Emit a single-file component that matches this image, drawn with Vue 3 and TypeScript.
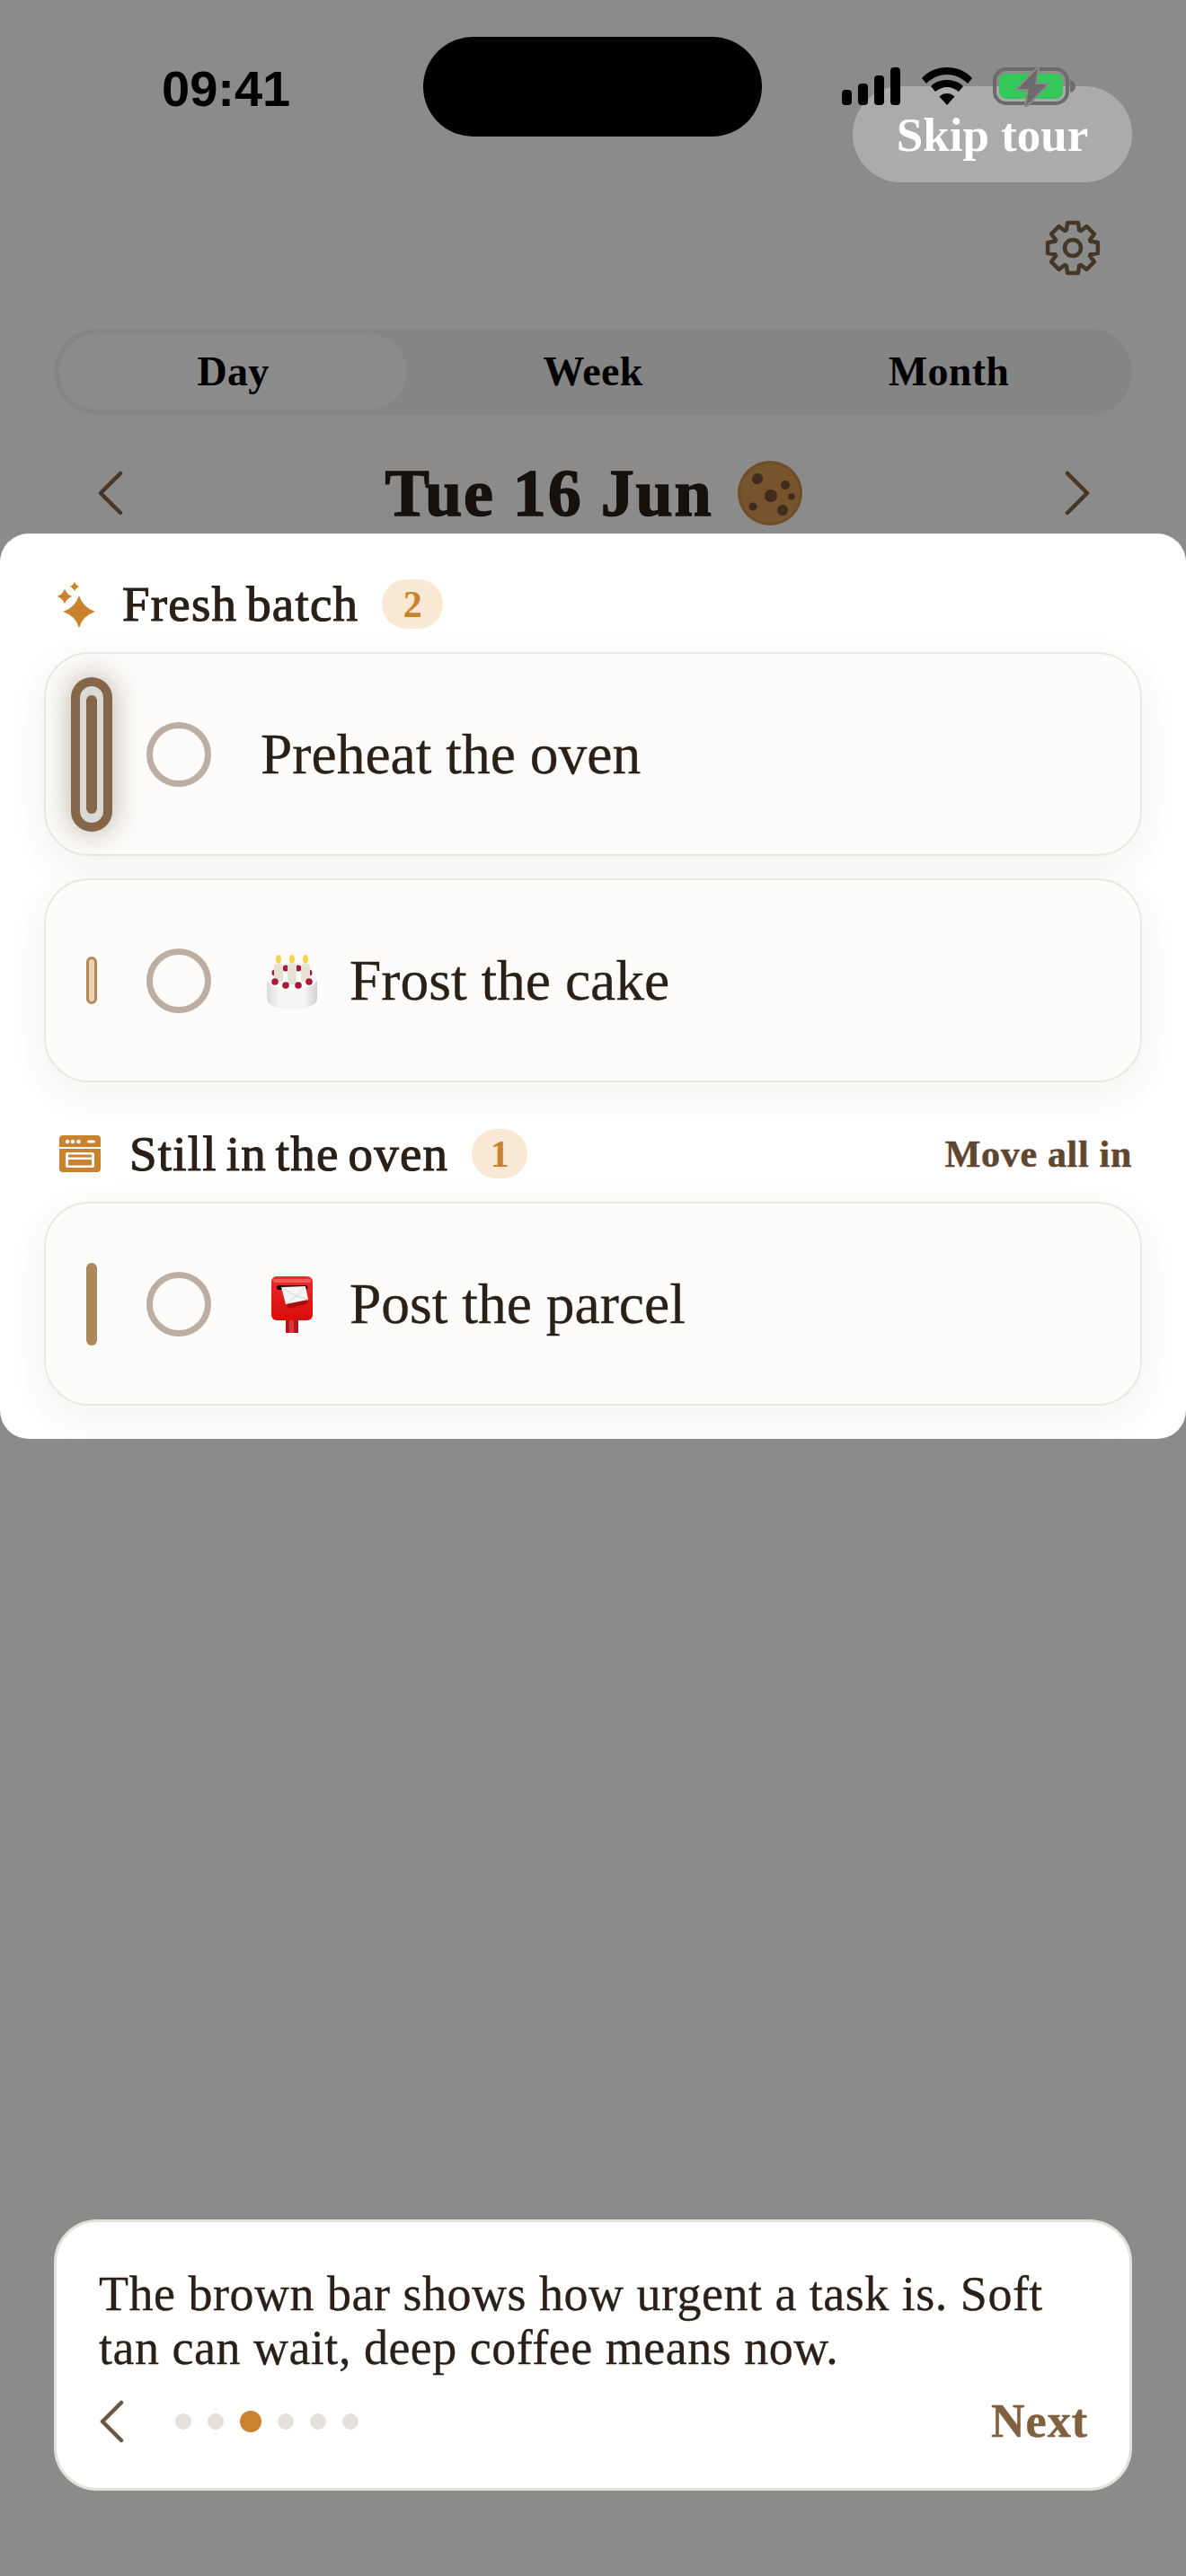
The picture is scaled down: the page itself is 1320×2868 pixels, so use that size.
<script setup lang="ts">
interface Task {
  title: string
  bar: 'active' | 'soft' | 'mid'
  emoji?: 'cake' | 'mailbox'
}

const tabs = ['Day', 'Week', 'Month']
const fresh: Task[] = [
  { title: 'Preheat the oven', bar: 'active' },
  { title: 'Frost the cake', bar: 'soft', emoji: 'cake' },
]
const oven: Task[] = [{ title: 'Post the parcel', bar: 'mid', emoji: 'mailbox' }]
const dots = [0, 1, 2, 3, 4, 5]
const activeDot = 2

function polar(r: number, deg: number) {
  const a = ((deg - 90) * Math.PI) / 180
  return `${(r * Math.cos(a)).toFixed(2)} ${(r * Math.sin(a)).toFixed(2)}`
}

// 8 blunt teeth, valleys sit halfway between them
const gearPath = (() => {
  let d = ''
  for (let k = 0; k < 8; k++) {
    const a = k * 45
    d += `${k ? 'L' : 'M'}${polar(21, a - 20)} L${polar(28.5, a - 12)} L${polar(28.5, a + 12)} L${polar(21, a + 20)} `
  }
  return d + 'Z'
})()

function star(cx: number, cy: number, r: number) {
  const c = r * 0.24
  return `M${cx} ${cy - r}Q${cx + c} ${cy - c} ${cx + r} ${cy}Q${cx + c} ${cy + c} ${cx} ${cy + r}Q${cx - c} ${cy + c} ${cx - r} ${cy}Q${cx - c} ${cy - c} ${cx} ${cy - r}Z`
}
</script>

<template>
  <div class="page">
    <header class="status">
      <span class="time">09:41</span>
      <div class="island"></div>
      <div class="status-icons">
        <svg width="66" height="42" viewBox="0 0 66 42" fill="#000">
          <rect x="0" y="25" width="11" height="17" rx="4" />
          <rect x="18" y="18" width="11" height="24" rx="4" />
          <rect x="36" y="9" width="11" height="33" rx="4" />
          <rect x="54" y="0" width="11" height="42" rx="4" />
        </svg>
        <svg width="58" height="42" viewBox="0 0 58 42" fill="#000">
          <path d="M29 0C18 0 8 4 1 12l5 6c6-6 14-10 23-10s17 4 23 10l5-6C50 4 40 0 29 0z" />
          <path d="M29 14c-7 0-13 2-18 7l5 6c4-3 8-5 13-5s9 2 13 5l5-6c-5-5-11-7-18-7z" />
          <path d="M29 29c-3 0-6 1-8.500 3.500L29 42l8.500-9.500C35 30 32 29 29 29z" />
        </svg>
        <svg width="93" height="44" viewBox="0 0 93 44">
          <rect x="2" y="2" width="81" height="38" rx="13" fill="none" stroke="#6b6b6b" stroke-width="4" />
          <rect x="7" y="7" width="71" height="28" rx="8" fill="#34c759" />
          <path d="M86 14c4 1 6 4 6 7s-2 6-6 7z" fill="#6b6b6b" />
          <path d="M50 1 L28 24 H40 L37 43 L60 19 H47 Z" fill="#6b6b6b" stroke="#8b8b8b" stroke-width="4" stroke-linejoin="round" paint-order="stroke" />
        </svg>
      </div>
    </header>

    <button class="skip">Skip tour</button>

    <div class="toolbar">
      <svg width="62" height="62" viewBox="-31 -31 62 62" fill="none" stroke="#453628" stroke-width="4.500" stroke-linejoin="round">
        <path :d="gearPath" />
        <circle r="9" />
      </svg>
    </div>

    <div class="tabs">
      <div v-for="(tab, i) in tabs" :key="tab" class="tab" :class="{ 'tab--on': i === 0 }">{{ tab }}</div>
    </div>

    <div class="date-row">
      <svg width="30" height="50" viewBox="0 0 30 50" fill="none" stroke="#453628" stroke-width="4.500" stroke-linecap="round" stroke-linejoin="round"><path d="M26 3 L4 25 L26 47" /></svg>
      <div class="date">
        <span>Tue 16 Jun</span>
        <svg width="72" height="72" viewBox="0 0 72 72">
          <circle cx="36" cy="36" r="36" fill="#6f4d26" />
          <circle cx="36" cy="36" r="33" fill="#75542e" />
          <circle cx="22" cy="20" r="6" fill="#402c1d" />
          <circle cx="53" cy="27" r="5" fill="#402c1d" />
          <circle cx="37" cy="39" r="7" fill="#402c1d" />
          <circle cx="60" cy="40" r="3.800" fill="#402c1d" />
          <circle cx="17" cy="51" r="4.600" fill="#402c1d" />
          <circle cx="50" cy="55" r="6" fill="#402c1d" />
        </svg>
      </div>
      <svg width="30" height="50" viewBox="0 0 30 50" fill="none" stroke="#453628" stroke-width="4.500" stroke-linecap="round" stroke-linejoin="round"><path d="M4 3 L26 25 L4 47" /></svg>
    </div>

    <main class="panel">
      <div class="sec-head">
        <svg class="sec-icon" width="44" height="52" viewBox="0 0 44 52" fill="#c9822e">
          <path :d="star(24, 34, 18)" />
          <path :d="star(8, 17, 8.5)" />
          <path :d="star(19, 6, 5.5)" />
        </svg>
        <span class="sec-title">Fresh batch</span>
        <span class="badge">2</span>
      </div>
      <div class="cards">
        <div v-for="t in fresh" :key="t.title" class="card">
          <span class="bar" :class="`bar--${t.bar}`"></span>
          <span class="radio"></span>
          <svg v-if="t.emoji === 'cake'" class="emoji emoji--cake" width="62" height="66" viewBox="0 0 62 66">
            <defs>
              <linearGradient id="cakeBody" x1="0" y1="0" x2="1" y2="0">
                <stop offset="0" stop-color="#dcdcdc" />
                <stop offset="0.25" stop-color="#f6f6f6" />
                <stop offset="0.75" stop-color="#f4f4f4" />
                <stop offset="1" stop-color="#d2d2d2" />
              </linearGradient>
            </defs>
            <path d="M3 29v22c0 7 12 12 28 12s28-5 28-12V29z" fill="url(#cakeBody)" />
            <ellipse cx="31" cy="29" rx="28" ry="12" fill="#fbfbfb" />
            <g fill="#a8183a">
              <circle cx="12" cy="22" r="3.500" /><circle cx="24" cy="17" r="3.500" /><circle cx="38" cy="17" r="3.500" /><circle cx="50" cy="22" r="3.500" />
            </g>
            <g fill="#e6e2d4">
              <rect x="11" y="12" width="10" height="20" rx="2" /><rect x="26" y="12" width="10" height="23" rx="2" /><rect x="41" y="12" width="10" height="20" rx="2" />
            </g>
            <g fill="#f8d24a">
              <ellipse cx="16" cy="7" rx="3" ry="5" /><ellipse cx="31" cy="7" rx="3" ry="5" /><ellipse cx="46" cy="7" rx="3" ry="5" />
            </g>
            <g fill="#a8183a">
              <circle cx="12" cy="32" r="3.800" /><circle cx="24" cy="36" r="3.800" /><circle cx="38" cy="36" r="3.800" /><circle cx="50" cy="32" r="3.800" />
            </g>
          </svg>
          <span class="task" :class="{ 'task--plain': !t.emoji }">{{ t.title }}</span>
        </div>
      </div>

      <div class="sec-head sec-head--second">
        <svg class="sec-icon" width="46" height="42" viewBox="0 0 46 42">
          <rect width="46" height="41" rx="4" fill="#c9822e" />
          <rect y="13" width="46" height="2" fill="#fff" />
          <circle cx="9" cy="7" r="2.300" fill="#fff" /><circle cx="15" cy="7" r="2.300" fill="#fff" /><circle cx="21.500" cy="7" r="2.300" fill="#fff" />
          <rect x="31" y="5.500" width="9" height="3" rx="1.500" fill="#fff" />
          <rect x="7" y="19" width="32" height="17" rx="2" fill="#fff" />
          <rect x="10" y="21.500" width="26" height="3" fill="#c9822e" />
          <rect x="10" y="27" width="26" height="6.500" fill="#c9822e" />
        </svg>
        <span class="sec-title">Still in the oven</span>
        <span class="badge">1</span>
        <span class="move">Move all in</span>
      </div>
      <div class="cards">
        <div v-for="t in oven" :key="t.title" class="card">
          <span class="bar" :class="`bar--${t.bar}`"></span>
          <span class="radio"></span>
          <svg class="emoji" width="62" height="66" viewBox="0 0 62 66">
            <defs>
              <linearGradient id="boxBody" x1="0" y1="0" x2="0" y2="1">
                <stop offset="0" stop-color="#ec2b2b" />
                <stop offset="1" stop-color="#d90b0b" />
              </linearGradient>
            </defs>
            <rect x="24" y="50" width="14" height="15" fill="#b5161c" />
            <rect x="28" y="50" width="5" height="15" fill="#d43a3e" />
            <rect x="8" y="2" width="46" height="49" rx="6" fill="url(#boxBody)" />
            <rect x="10" y="5" width="42" height="4" rx="2" fill="#f35a55" />
            <rect x="14" y="12" width="34" height="5" rx="2.500" fill="#120404" />
            <path d="M22 20 L46 18 L49 32 L27 38 Z" fill="#a90c0c" />
            <path d="M19 14 L46 13 L49 28 L24 33 Z" fill="#f5f5f5" />
            <path d="M19 14 L36 24 L46 13 M24 33 L36 24 L49 28" fill="none" stroke="#cfcfcf" stroke-width="0.800" />
          </svg>
          <span class="task">{{ t.title }}</span>
        </div>
      </div>
    </main>

    <aside class="coach">
      <p class="coach-text">The brown bar shows how urgent a task is. Soft tan can wait, deep coffee means now.</p>
      <div class="coach-foot">
        <svg width="28" height="48" viewBox="0 0 28 48" fill="none" stroke="#6a5443" stroke-width="4.500" stroke-linecap="round" stroke-linejoin="round"><path d="M25 3 L4 24 L25 45" /></svg>
        <div class="dots">
          <span v-for="d in dots" :key="d" class="dot" :class="{ 'dot--on': d === activeDot }"></span>
        </div>
        <span class="next">Next</span>
      </div>
    </aside>
  </div>
</template>

<style>
html,
body {
  margin: 0;
  background: #8b8b8b;
}
</style>

<style scoped>
.page {
  position: relative;
  width: 1320px;
  height: 2868px;
  overflow: hidden;
  background: #8b8b8b;
  font-family: 'Liberation Serif', serif;
}

.status {
  position: relative;
  z-index: 2;
  height: 152px;
  padding-top: 41px;
  box-sizing: border-box;
  display: flex;
  align-items: flex-start;
}
.time {
  width: 471px;
  padding: 28px 0 0 180px;
  box-sizing: border-box;
  font: 700 56px/60px 'Liberation Sans', sans-serif;
  color: #000;
}
.island {
  width: 377px;
  height: 111px;
  border-radius: 56px;
  background: #000;
}
.status-icons {
  display: flex;
  align-items: flex-start;
  gap: 22px;
  margin: 34px 0 0 89px;
}

.skip {
  position: absolute;
  left: 949px;
  top: 96px;
  width: 311px;
  height: 107px;
  border: 0;
  border-radius: 54px;
  background: rgba(255, 255, 255, 0.28);
  color: #fff;
  font: 700 53px 'Liberation Serif', serif;
}

.toolbar {
  display: flex;
  justify-content: flex-end;
  padding: 93px 95px 0 0;
}

.tabs {
  margin: 59px 60px 0;
  height: 96px;
  padding: 6px;
  box-sizing: border-box;
  border-radius: 48px;
  background: #858585;
  display: grid;
  grid-template-columns: repeat(3, 1fr);
}
.tab {
  border-radius: 42px;
  padding-bottom: 2px;
  display: flex;
  align-items: center;
  justify-content: center;
  font-size: 46px;
  font-weight: 700;
  letter-spacing: 0.3px;
  color: #000;
}
.tab--on {
  margin-right: 9px;
  background: #8b8b8b;
}

.date-row {
  margin-top: 51px;
  padding: 0 106px 0 108px;
  height: 72px;
  display: flex;
  align-items: center;
  justify-content: space-between;
}
.date {
  display: flex;
  align-items: center;
  gap: 28px;
  font-size: 74px;
  font-weight: 700;
  letter-spacing: 1.8px;
  -webkit-text-stroke: 1.5px #16110c;
  color: #16110c;
}

.panel {
  margin-top: 9px;
  height: 1008px;
  padding: 51px 49px 0;
  box-sizing: border-box;
  background: #fff;
  border-radius: 32px;
}
.sec-head {
  height: 55px;
  padding: 0 11px 0 15px;
  display: flex;
  align-items: center;
  color: #2a2018;
}
.sec-head--second {
  margin-top: 52px;
}
.sec-icon {
  margin-right: 28px;
  flex: none;
}
.sec-head--second .sec-icon {
  margin: 0 32px 0 2px;
}
.sec-title {
  font-size: 55px;
  letter-spacing: 1.2px;
  word-spacing: -5px;
  -webkit-text-stroke: 1.1px #2a2018;
}
.badge {
  margin-left: 26px;
  width: 68px;
  height: 55px;
  border-radius: 28px;
  background: #f8e8d4;
  color: #c9822e;
  display: flex;
  align-items: center;
  justify-content: center;
  font-size: 42px;
  font-weight: 700;
}
.sec-head--second .badge {
  width: 62px;
}
.move {
  margin-left: auto;
  font-size: 42px;
  font-weight: 700;
  letter-spacing: 0.7px;
  -webkit-text-stroke: 0.5px #604530;
  color: #604530;
}

.cards {
  margin-top: 26px;
  display: flex;
  flex-direction: column;
  gap: 25px;
}
.card {
  height: 227px;
  box-sizing: border-box;
  border: 2px solid #ebe7e1;
  border-radius: 50px;
  background: #fdfcfa;
  box-shadow: 0 12px 48px rgba(60, 40, 20, 0.06);
  padding-left: 45px;
  display: flex;
  align-items: center;
}
.bar {
  flex: none;
  width: 12px;
  border-radius: 6px;
}
.bar--active {
  position: relative;
  height: 132px;
}
.bar--active::before {
  content: '';
  position: absolute;
  inset: -20px -17px;
  box-sizing: border-box;
  border: 10px solid #85664a;
  border-radius: 24px;
  background: #dbd9d6;
  box-shadow: 0 0 30px 4px rgba(60, 40, 20, 0.28);
}
.bar--active::after {
  content: '';
  position: absolute;
  inset: 0;
  border-radius: 6px;
  background: #85664a;
}
.bar--soft {
  height: 53px;
  box-sizing: border-box;
  background: #edd3ae;
  border: 3px solid #b08a5a;
}
.bar--mid {
  height: 92px;
  background: #ab875a;
}
.radio {
  flex: none;
  margin-left: 55px;
  width: 72px;
  height: 72px;
  box-sizing: border-box;
  border: 7px solid #bcaea0;
  border-radius: 50%;
}
.emoji {
  flex: none;
  margin-left: 59px;
}
.emoji--cake {
  margin-top: 4px;
}
.task {
  margin-left: 33px;
  font-size: 63.5px;
  -webkit-text-stroke: 0.3px #2a2018;
  color: #2a2018;
}
.task--plain {
  margin-left: 55px;
}

.coach {
  position: absolute;
  left: 60px;
  top: 2471px;
  width: 1200px;
  height: 302px;
  box-sizing: border-box;
  padding: 50px 46px 0 47px;
  border: 3px solid #e5e1da;
  border-radius: 48px;
  background: #fff;
}
.coach-text {
  margin: 0;
  font-size: 54px;
  line-height: 60px;
  letter-spacing: 0.5px;
  -webkit-text-stroke: 0.3px #2a2018;
  color: #2a2018;
}
.coach-foot {
  margin-top: 22px;
  display: flex;
  align-items: center;
}
.dots {
  margin-left: 57px;
  display: flex;
  align-items: center;
  gap: 18px;
}
.dot {
  width: 18px;
  height: 18px;
  border-radius: 50%;
  background: #e5e1da;
}
.dot--on {
  width: 24px;
  height: 24px;
  background: #c9822e;
}
.next {
  margin-left: auto;
  font-size: 52px;
  font-weight: 700;
  letter-spacing: 1px;
  -webkit-text-stroke: 0.5px #80603f;
  color: #80603f;
}
</style>
